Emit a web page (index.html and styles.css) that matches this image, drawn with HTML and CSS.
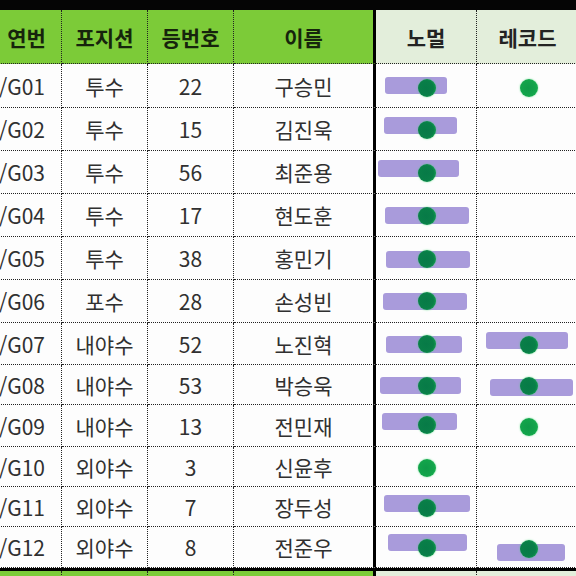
FILE: index.html
```html
<!DOCTYPE html>
<html lang="ko">
<head>
<meta charset="utf-8">
<title>선수 명단</title>
<link rel="stylesheet" href="styles.css">
</head>
<body>
<div class="sheet">
  <div class="bezel"></div>
  <div class="row head">
    <div class="c id">연번</div><div class="c">포지션</div><div class="c">등번호</div><div class="c name">이름</div><div class="c alt">노멀</div><div class="c alt">레코드</div>
  </div>
  <div class="row">
    <div class="c id">1/G01</div><div class="c">투수</div><div class="c">22</div><div class="c name">구승민</div>
    <div class="c vis"><span class="bar" style="--x:9px;--y:13px;--w:62px"></span><span class="dot" style="--cx:51px;--cy:24px"></span></div>
    <div class="c vis"><span class="dot lit" style="--cx:52px;--cy:24px"></span></div>
  </div>
  <div class="row">
    <div class="c id">1/G02</div><div class="c">투수</div><div class="c">15</div><div class="c name">김진욱</div>
    <div class="c vis"><span class="bar" style="--x:8px;--y:9px;--w:73px"></span><span class="dot" style="--cx:51px;--cy:22px"></span></div>
    <div class="c vis"></div>
  </div>
  <div class="row">
    <div class="c id">1/G03</div><div class="c">투수</div><div class="c">56</div><div class="c name">최준용</div>
    <div class="c vis"><span class="bar" style="--x:2px;--y:9px;--w:81px"></span><span class="dot" style="--cx:51px;--cy:22px"></span></div>
    <div class="c vis"></div>
  </div>
  <div class="row">
    <div class="c id">1/G04</div><div class="c">투수</div><div class="c">17</div><div class="c name">현도훈</div>
    <div class="c vis"><span class="bar" style="--x:9px;--y:13px;--w:84px"></span><span class="dot" style="--cx:51px;--cy:22px"></span></div>
    <div class="c vis"></div>
  </div>
  <div class="row">
    <div class="c id">1/G05</div><div class="c">투수</div><div class="c">38</div><div class="c name">홍민기</div>
    <div class="c vis"><span class="bar" style="--x:10px;--y:14px;--w:84px"></span><span class="dot" style="--cx:51px;--cy:22px"></span></div>
    <div class="c vis"></div>
  </div>
  <div class="row">
    <div class="c id">1/G06</div><div class="c">포수</div><div class="c">28</div><div class="c name">손성빈</div>
    <div class="c vis"><span class="bar" style="--x:7px;--y:13px;--w:84px"></span><span class="dot" style="--cx:51px;--cy:21px"></span></div>
    <div class="c vis"></div>
  </div>
  <div class="row">
    <div class="c id">1/G07</div><div class="c">내야수</div><div class="c">52</div><div class="c name">노진혁</div>
    <div class="c vis"><span class="bar" style="--x:10px;--y:13px;--w:76px"></span><span class="dot" style="--cx:51px;--cy:21px"></span></div>
    <div class="c vis"><span class="bar" style="--x:9px;--y:9px;--w:82px"></span><span class="dot" style="--cx:52px;--cy:22px"></span></div>
  </div>
  <div class="row">
    <div class="c id">1/G08</div><div class="c">내야수</div><div class="c">53</div><div class="c name">박승욱</div>
    <div class="c vis"><span class="bar" style="--x:4px;--y:12px;--w:81px"></span><span class="dot" style="--cx:51px;--cy:21px"></span></div>
    <div class="c vis"><span class="bar" style="--x:13px;--y:14px;--w:83px"></span><span class="dot" style="--cx:52px;--cy:21px"></span></div>
  </div>
  <div class="row">
    <div class="c id">1/G09</div><div class="c">내야수</div><div class="c">13</div><div class="c name">전민재</div>
    <div class="c vis"><span class="bar" style="--x:6px;--y:8px;--w:75px"></span><span class="dot" style="--cx:51px;--cy:20px"></span></div>
    <div class="c vis"><span class="dot lit" style="--cx:52px;--cy:22px"></span></div>
  </div>
  <div class="row">
    <div class="c id">1/G10</div><div class="c">외야수</div><div class="c">3</div><div class="c name">신윤후</div>
    <div class="c vis"><span class="dot lit" style="--cx:51px;--cy:21px"></span></div>
    <div class="c vis"></div>
  </div>
  <div class="row">
    <div class="c id">1/G11</div><div class="c">외야수</div><div class="c">7</div><div class="c name">장두성</div>
    <div class="c vis"><span class="bar" style="--x:8px;--y:8px;--w:86px"></span><span class="dot" style="--cx:51px;--cy:21px"></span></div>
    <div class="c vis"></div>
  </div>
  <div class="row">
    <div class="c id">1/G12</div><div class="c">외야수</div><div class="c">8</div><div class="c name">전준우</div>
    <div class="c vis"><span class="bar" style="--x:12px;--y:7px;--w:79px"></span><span class="dot" style="--cx:51px;--cy:21px"></span></div>
    <div class="c vis"><span class="bar" style="--x:20px;--y:17px;--w:68px"></span><span class="dot" style="--cx:52px;--cy:22px"></span></div>
  </div>
  <div class="rule"></div>
  <div class="row foot">
    <div class="c id"></div><div class="c"></div><div class="c"></div><div class="c name"></div><div class="c alt"></div><div class="c alt"></div>
  </div>
</div>
</body>
</html>
```
FILE: styles.css
```css
* { box-sizing: border-box; }

html, body {
  margin: 0;
  padding: 0;
  width: 576px;
  height: 576px;
  overflow: hidden;
  background: #fdfdfd;
}

body {
  font-family: "Noto Sans CJK KR", "Noto Sans", sans-serif;
}

.sheet {
  display: grid;
  grid-template-rows: 10px 54px 44px 43px 43px 43px 43px 43px 42px 40px 42px 40px 40px 41px 3px 8px;
  width: 597px;
  margin-left: -18px;
}

.bezel { background: #050505; }

.rule { background: #000; }

.row {
  display: grid;
  grid-template-columns: 80px 86px 86px 142px 101px 102px;
}

.c {
  display: flex;
  align-items: center;
  justify-content: center;
  border-right: 1px dotted #222;
  border-bottom: 1px dotted #222;
  font-size: 21px;
  color: #303030;
  white-space: nowrap;
  overflow: hidden;
}

.c.id {
  justify-content: flex-end;
  padding-right: 16px;
}

.c.name {
  border-right: 3px solid #000;
}

.head .c {
  background: #7ccb38;
  color: #16240c;
  font-weight: 700;
  font-size: 21px;
  padding-top: 1px;
}

.head .c.id {
  justify-content: center;
  padding-right: 0;
  padding-left: 10px;
}

.head .c.alt {
  background: #e3eedb;
  color: #232323;
}

.foot .c {
  background: #7ccb38;
  border-bottom: none;
}

.foot .c.alt {
  background: #e3eedb;
}

.vis {
  position: relative;
  overflow: visible;
}

.bar {
  position: absolute;
  left: var(--x);
  top: var(--y);
  width: var(--w);
  height: 17px;
  border-radius: 3px;
  background: #a99bdb;
}

.dot {
  position: absolute;
  left: calc(var(--cx) - 9px);
  top: calc(var(--cy) - 9px);
  width: 18px;
  height: 18px;
  border-radius: 50%;
  background: radial-gradient(circle at 45% 50%, #077a47 0%, #097f48 55%, #12a24e 78%, #2ccf62 100%);
  box-shadow: 0 0 2px rgba(60, 220, 110, 0.7);
}

.dot.lit {
  background: radial-gradient(circle at 45% 50%, #0f9a48 0%, #13a54b 60%, #22bd57 85%, #3fd870 100%);
}
```
